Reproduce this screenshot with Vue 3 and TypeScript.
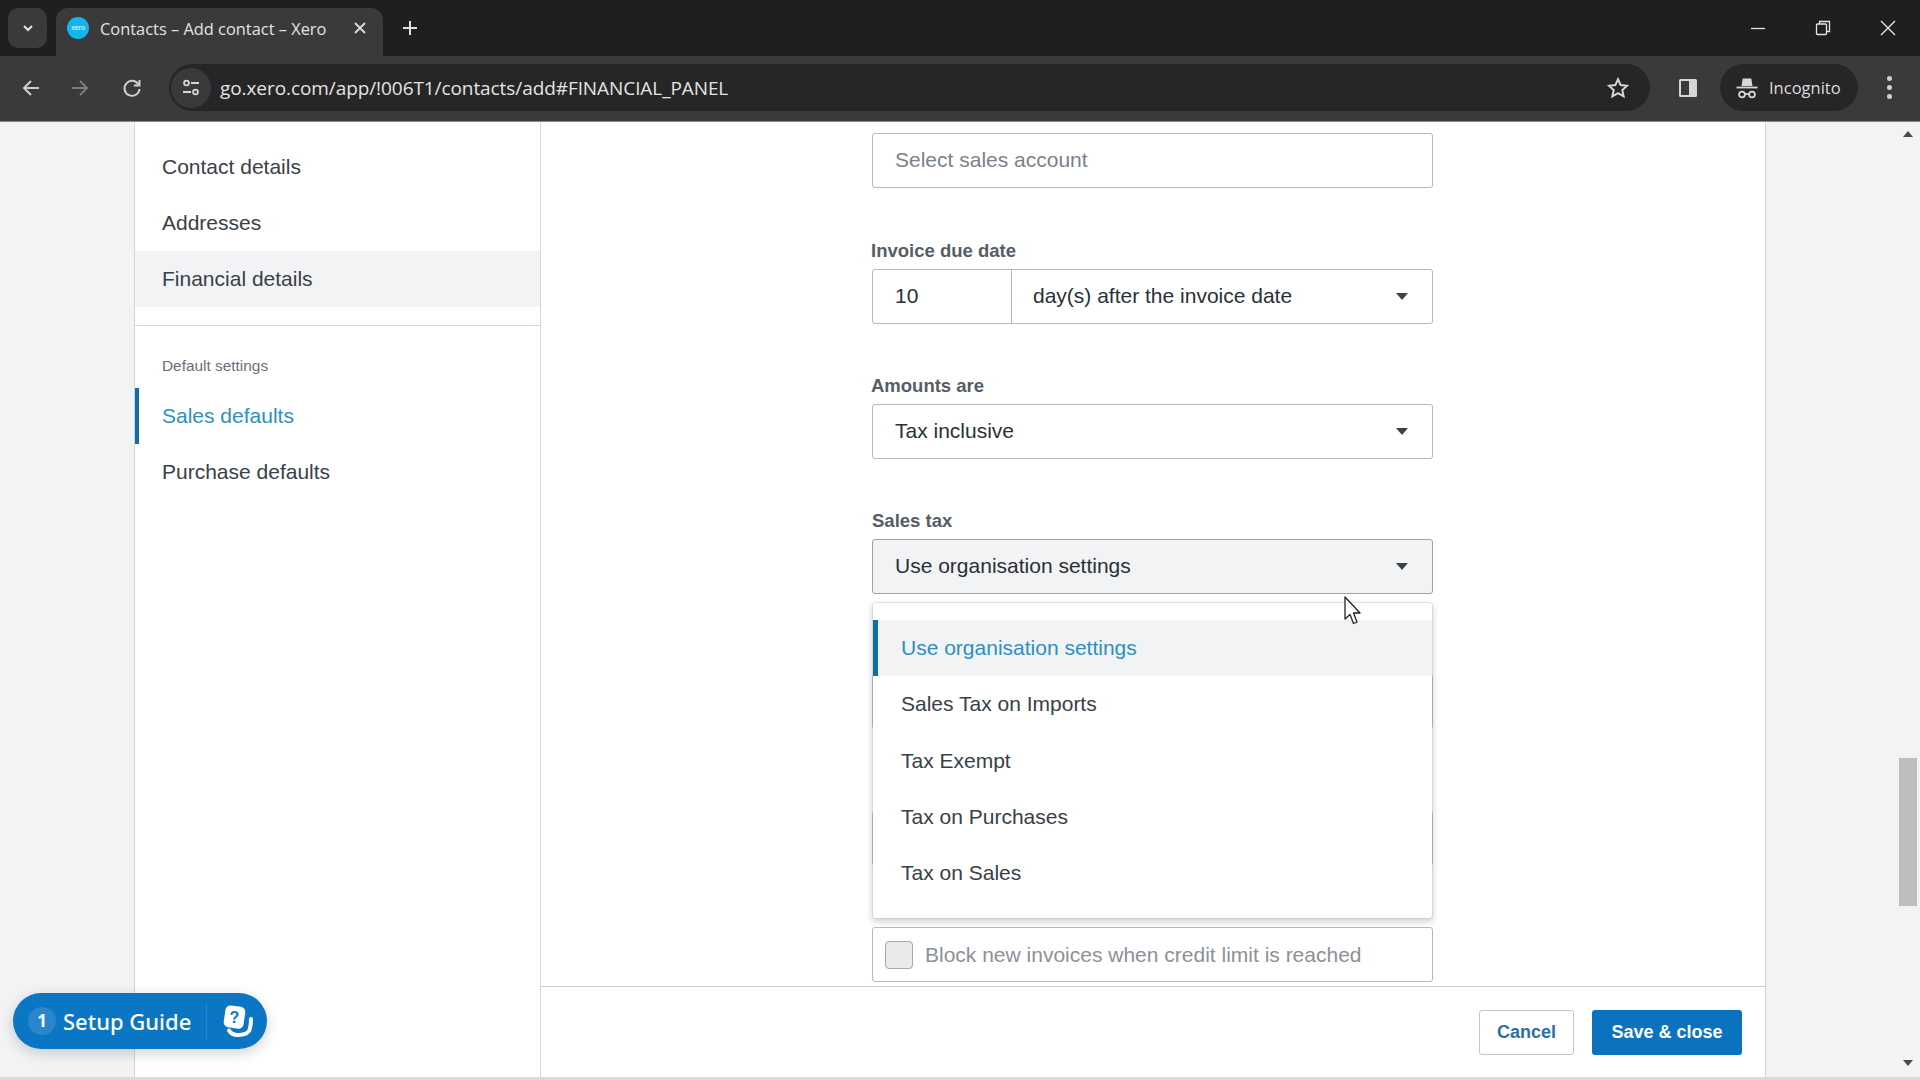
<script setup lang="ts">
const options = ['Use organisation settings', 'Sales Tax on Imports', 'Tax Exempt', 'Tax on Purchases', 'Tax on Sales']
const primaryNav = ['Contact details', 'Addresses', 'Financial details']
const secondaryNav = ['Sales defaults', 'Purchase defaults']
</script>

<template>
  <div class="window">
    <header class="tabstrip">
      <button class="tab-search">
        <svg width="14" height="14" viewBox="0 0 14 14"><path d="M3 5l4 4 4-4" fill="none" stroke="#e4e4e4" stroke-width="2" /></svg>
      </button>
      <div class="tab">
        <span class="favicon">xero</span>
        <span class="tab-title">Contacts – Add contact – Xero</span>
        <svg class="tab-close" width="14" height="14" viewBox="0 0 14 14"><path d="M2 2l10 10M12 2L2 12" stroke="#dcdcdc" stroke-width="1.8" /></svg>
      </div>
      <svg class="new-tab" width="16" height="16" viewBox="0 0 16 16"><path d="M8 1v14M1 8h14" stroke="#e0e0e0" stroke-width="2" /></svg>
      <div class="window-controls">
        <svg width="16" height="16" viewBox="0 0 16 16"><path d="M1 8.5h14" stroke="#e4e4e4" stroke-width="1.3" /></svg>
        <svg width="16" height="16" viewBox="0 0 16 16" fill="none" stroke="#e4e4e4" stroke-width="1.3"><rect x="1.5" y="4" width="10" height="10.5" rx="1" /><path d="M4.5 4V1.5h10v10H11.5" /></svg>
        <svg width="16" height="16" viewBox="0 0 16 16"><path d="M1 1l14 14M15 1L1 15" stroke="#e4e4e4" stroke-width="1.4" /></svg>
      </div>
    </header>

    <nav class="toolbar">
      <svg class="nav-back" width="20" height="20" viewBox="0 0 20 20" fill="none" stroke="#cfcfcf" stroke-width="2"><path d="M18 10H3M10 3l-7 7 7 7" /></svg>
      <svg class="nav-forward" width="20" height="20" viewBox="0 0 20 20" fill="none" stroke="#7d7d7d" stroke-width="2"><path d="M2 10h15M10 3l7 7-7 7" /></svg>
      <svg class="nav-reload" width="20" height="20" viewBox="0 0 20 20" fill="none" stroke="#cfcfcf" stroke-width="2"><path d="M16.5 6.5A7.5 7.5 0 1 0 17.5 11" /><path d="M17.5 2v5.5H12" /></svg>
      <div class="omnibox">
        <span class="site-info">
          <svg width="20" height="20" viewBox="0 0 20 20" fill="none" stroke="#d6d6d6" stroke-width="1.8"><circle cx="5.5" cy="5" r="2.4" /><path d="M10 5h8M2 14h8" /><circle cx="14.5" cy="14" r="2.4" /></svg>
        </span>
        <span class="url">go.xero.com/app/!006T1/contacts/add#FINANCIAL_PANEL</span>
        <svg class="star" width="22" height="22" viewBox="0 0 24 24" fill="none" stroke="#d6d6d6" stroke-width="2.2"><path d="M12 2.5l2.9 6.3 6.9.8-5.1 4.7 1.4 6.8L12 17.7l-6.1 3.4 1.4-6.8-5.1-4.7 6.9-.8z" /></svg>
      </div>
      <svg class="side-panel" width="20" height="20" viewBox="0 0 20 20"><rect x="1" y="1" width="18" height="18" rx="1.5" fill="#d4d4d4" /><rect x="3" y="3" width="8" height="14" fill="#3a3a3a" /></svg>
      <div class="incognito">
        <svg width="22" height="24" viewBox="0 0 22 24" fill="none" stroke="#d8d8d8" stroke-width="1.8"><path d="M5.5 10l1.2-7.500h8.600L16.500 10z" fill="#d8d8d8" stroke="none" /><path d="M0.500 11.500h21" /><circle cx="6" cy="18.500" r="2.900" /><circle cx="16" cy="18.500" r="2.900" /><path d="M9 18h4" /></svg>
        <span>Incognito</span>
      </div>
      <span class="kebab"><i></i><i></i><i></i></span>
    </nav>

    <div class="page">
      <div class="gutter-left"></div>

      <aside class="sidebar">
        <a
          v-for="item in primaryNav"
          :key="item"
          class="nav-item"
          :class="{ selected: item === 'Financial details' }"
        >{{ item }}</a>
        <hr class="nav-rule" />
        <div class="nav-heading">Default settings</div>
        <a
          v-for="item in secondaryNav"
          :key="item"
          class="nav-item"
          :class="{ active: item === 'Sales defaults' }"
        >{{ item }}</a>
      </aside>

      <main class="main">
        <div class="scroll">
          <form class="form" @submit.prevent>
            <div class="field placeholder">Select sales account</div>

            <div class="group first">
              <label class="label">Invoice due date</label>
              <div class="field split">
                <span class="days">10</span>
                <span class="after">day(s) after the invoice date<i class="caret"></i></span>
              </div>
            </div>

            <div class="group">
              <label class="label">Amounts are</label>
              <div class="field">Tax inclusive<i class="caret"></i></div>
            </div>

            <div class="group">
              <label class="label tight">Sales tax</label>
              <div class="field open">Use organisation settings<i class="caret"></i></div>
              <ul class="menu">
                <li
                  v-for="(opt, i) in options"
                  :key="opt"
                  class="option"
                  :class="{ current: i === 0 }"
                >{{ opt }}</li>
              </ul>
            </div>

            <div class="field behind one"></div>
            <div class="field behind two"></div>

            <div class="field check">
              <span class="box"></span>
              <span>Block new invoices when credit limit is reached</span>
            </div>
          </form>
        </div>

        <footer class="footer">
          <button class="btn cancel">Cancel</button>
          <button class="btn save">Save &amp; close</button>
        </footer>
      </main>

      <div class="gutter-right">
        <div class="scrollbar">
          <i class="arrow up"></i>
          <i class="thumb"></i>
          <i class="arrow down"></i>
        </div>
      </div>

      <button class="setup-guide">
        <span class="count">1</span>
        <span class="setup-text">Setup Guide</span>
        <span class="setup-icon">
          <svg width="32" height="34" viewBox="0 0 32 34">
            <path d="M7 26.500c2 3.500 5 4.500 9 4.500 6 0 10-1.500 11.500-5 1-3 1.500-7 1.500-11" fill="none" stroke="#fff" stroke-width="4" stroke-linecap="round" />
            <rect x="2.500" y="2" width="20" height="22" rx="5" fill="#fff" transform="rotate(8 12 13)" />
            <text x="12.500" y="19" text-anchor="middle" class="q">?</text>
          </svg>
        </span>
      </button>

      <svg class="cursor" width="20" height="30" viewBox="0 0 20 30">
        <path d="M2 1v22l5-4.500 3.500 9 3.500-1.500-3.500-9H17z" fill="#fff" stroke="#222" stroke-width="1.300" stroke-linejoin="round" />
      </svg>
    </div>

    <div class="bottom-edge"></div>
  </div>
</template>

<style>
html, body { margin: 0; background: #fff; overflow: hidden; }
</style>

<style scoped>
.window {
  width: 1920px;
  height: 1080px;
  display: flex;
  flex-direction: column;
  overflow: hidden;
  font-family: "Liberation Sans", Arial, sans-serif;
}

/* browser chrome */
.tabstrip {
  height: 56px;
  flex: none;
  box-sizing: border-box;
  background: #1f1f1f;
  display: flex;
  align-items: flex-start;
  padding: 8px 0 0 8px;
}
.tab-search {
  width: 39px;
  height: 40px;
  border: 0;
  padding: 0;
  border-radius: 10px;
  background: #3a3a3a;
  display: flex;
  align-items: center;
  justify-content: center;
}
.tab {
  width: 327px;
  height: 48px;
  margin-left: 9px;
  box-sizing: border-box;
  padding: 0 16px 8px 11px;
  border-radius: 12px 12px 0 0;
  background: #3a3a3a;
  display: flex;
  align-items: center;
}
.favicon {
  width: 22px;
  height: 22px;
  flex: none;
  border-radius: 50%;
  background: #13b5ea;
  color: #fff;
  font-size: 7px;
  line-height: 22px;
  text-align: center;
}
.tab-title {
  margin-left: 11px;
  flex: 1;
  font-family: "Open Sans", sans-serif;
  font-size: 16.4px;
  color: #e3e3e3;
  white-space: nowrap;
}
.new-tab { margin: 12px 0 0 19px; }
.window-controls {
  margin: 12px 24px 0 auto;
  display: flex;
  gap: 49px;
}

.toolbar {
  height: 66px;
  flex: none;
  box-sizing: border-box;
  background: #3a3a3a;
  border-bottom: 1px solid #8a8a8a;
  display: flex;
  align-items: center;
  padding: 0 0 2px 21px;
}
.nav-forward { margin-left: 29px; }
.nav-reload { margin-left: 32px; }
.omnibox {
  width: 1481px;
  height: 47px;
  margin-left: 27px;
  box-sizing: border-box;
  border-radius: 24px;
  background: #262626;
  display: flex;
  align-items: center;
  padding: 0 21px 0 0;
}
.site-info {
  width: 40px;
  height: 40px;
  margin-left: 2px;
  border-radius: 50%;
  background: #3a3a3a;
  display: flex;
  align-items: center;
  justify-content: center;
}
.url {
  margin-left: 9px;
  font-family: "Open Sans", sans-serif;
  font-size: 19px;
  letter-spacing: -0.08px;
  color: #e3e3e3;
  white-space: nowrap;
}
.star { margin-left: auto; }
.side-panel { margin-left: 28px; }
.incognito {
  width: 138px;
  height: 47px;
  margin-left: 22px;
  box-sizing: border-box;
  border-radius: 24px;
  background: #262626;
  display: flex;
  align-items: center;
  padding-left: 16px;
  gap: 11px;
  font-family: "Open Sans", sans-serif;
  font-size: 16.5px;
  color: #dcdcdc;
}
.kebab {
  margin-left: 29px;
  display: flex;
  flex-direction: column;
  gap: 4px;
}
.kebab i {
  width: 5px;
  height: 5px;
  border-radius: 50%;
  background: #d0d0d0;
}

/* page */
.page {
  flex: 1;
  min-height: 0;
  position: relative;
  display: flex;
  background: #fff;
  color: #2a3037;
  font-size: 20px;
}
.gutter-left {
  width: 134px;
  flex: none;
  background: #f2f3f5;
  border-right: 1px solid #d3d5d8;
}
.sidebar {
  width: 406px;
  flex: none;
  padding-top: 17px;
  box-sizing: border-box;
  border-right: 1px solid #d3d5d8;
  background: #fff;
}
.nav-item {
  display: block;
  height: 56px;
  line-height: 56px;
  padding-left: 27px;
  font-size: 21px;
  color: #39404a;
}
.nav-item.selected { background: #f2f3f5; }
.nav-item.active {
  color: #2f8fbd;
  box-shadow: inset 4px 0 0 #0f6ea6;
}
.nav-rule {
  margin: 18px 0 0;
  border: 0;
  border-top: 1px solid #d3d5d8;
}
.nav-heading {
  margin: 28px 0 10px;
  padding-left: 27px;
  height: 24px;
  line-height: 24px;
  font-size: 15.4px;
  color: #69707a;
}

.main {
  flex: 1;
  min-width: 0;
  display: flex;
  flex-direction: column;
  background: #fff;
}
.scroll {
  flex: 1;
  min-height: 0;
  overflow: hidden;
  padding: 11px 1px 0 0;
}
.form {
  width: 561px;
  margin: 0 auto;
}
.group { margin-top: 50px; position: relative; }
.group.first { margin-top: 51px; }
.label {
  display: block;
  height: 24px;
  margin-bottom: 6px;
  margin-left: -1px;
  line-height: 24px;
  font-size: 18.5px;
  font-weight: 700;
  color: #565d66;
}
.label.tight { margin-left: 0; }
.field {
  height: 55px;
  box-sizing: border-box;
  border: 1.5px solid #b4b7bb;
  border-radius: 3px;
  background: #fff;
  padding: 0 22px 1px;
  display: flex;
  align-items: center;
  position: relative;
  color: #2a3037;
  font-size: 21px;
}
.placeholder { color: #7b8189; }
.split { padding: 0; }
.days {
  width: 139px;
  height: 100%;
  box-sizing: border-box;
  padding: 0 0 1px 22px;
  display: flex;
  align-items: center;
  border-right: 1.5px solid #b4b7bb;
}
.after {
  flex: 1;
  padding: 0 0 1px 21px;
}
.caret {
  position: absolute;
  right: 24px;
  top: 23px;
  width: 0;
  height: 0;
  border-left: 6.5px solid transparent;
  border-right: 6.5px solid transparent;
  border-top: 7px solid #3b424b;
}
.field.open {
  background: #f2f3f5;
  border-color: #9fa3a9;
}
.menu {
  position: absolute;
  top: 93px;
  left: 0;
  right: 0;
  z-index: 3;
  height: 317px;
  box-sizing: border-box;
  margin: 0;
  padding: 17px 0 0;
  list-style: none;
  background: #fff;
  background-clip: padding-box;
  border: 1.5px solid rgba(180, 183, 187, 0.35);
  border-radius: 4px;
  box-shadow: 0 3px 6px rgba(0, 0, 0, 0.18);
}
.option {
  height: 56.25px;
  line-height: 56px;
  padding-left: 28px;
  font-size: 21px;
  color: #39404a;
}
.option.current {
  color: #2f8fbd;
  background: #f2f3f5;
  box-shadow: inset 5px 0 0 #0f6ea6;
}
.behind.one { margin-top: 80px; }
.behind.two { margin-top: 82px; }
.check {
  margin-top: 61px;
  padding: 0 0 0 12px;
  gap: 12px;
  color: #8c9198;
}
.box {
  width: 28px;
  height: 28px;
  flex: none;
  box-sizing: border-box;
  background: #e8eaec;
  border: 1.5px solid #a4a8ad;
  border-radius: 4px;
}

.footer {
  height: 91px;
  flex: none;
  box-sizing: border-box;
  border-top: 1px solid #c9ccd0;
  display: flex;
  justify-content: flex-end;
  align-items: center;
  gap: 18px;
  padding: 0 23px 0 0;
  background: #fff;
}
.btn {
  height: 45px;
  border-radius: 3px;
  font-family: "Liberation Sans", Arial, sans-serif;
  font-size: 18px;
  font-weight: 700;
  padding: 0;
}
.cancel {
  width: 95px;
  background: #fff;
  color: #2b6fa8;
  border: 1.5px solid #c2c5c9;
}
.save {
  width: 150px;
  background: #0b72c0;
  color: #fff;
  border: 0;
}

.gutter-right {
  width: 155px;
  flex: none;
  box-sizing: border-box;
  background: #f2f3f5;
  border-left: 1px solid #d3d5d8;
  display: flex;
  justify-content: flex-end;
}
.scrollbar {
  width: 18px;
  margin-right: 3px;
  padding-top: 9px;
  display: flex;
  flex-direction: column;
  align-items: center;
}
.arrow {
  width: 0;
  height: 0;
  border-left: 5px solid transparent;
  border-right: 5px solid transparent;
}
.arrow.up { border-bottom: 6px solid #4a4a4a; }
.arrow.down { border-top: 6px solid #4a4a4a; margin-top: 154px; }
.thumb {
  width: 18px;
  height: 148px;
  margin-top: 621px;
  background: #bdbdbd;
}

.setup-guide {
  position: absolute;
  left: 13px;
  top: 871px;
  z-index: 4;
  width: 254px;
  height: 56px;
  box-sizing: border-box;
  border: 0;
  border-radius: 28px;
  padding: 0 0 0 15px;
  background: #0b76c4;
  box-shadow: 0 4px 14px rgba(0, 0, 0, 0.18);
  color: #fff;
  display: flex;
  align-items: center;
  font-family: "Noto Sans", sans-serif;
}
.count {
  width: 28px;
  height: 28px;
  flex: none;
  border-radius: 50%;
  background: #2a86cc;
  font-size: 17px;
  font-weight: 700;
  line-height: 28px;
  text-align: center;
}
.setup-text {
  margin-left: 7px;
  font-size: 22px;
  font-weight: 500;
  white-space: nowrap;
}
.setup-icon {
  margin-left: 15px;
  padding-left: 15px;
  height: 36px;
  border-left: 1px solid #2a86cc;
  display: flex;
  align-items: center;
}
.q {
  font-family: "Liberation Sans", Arial, sans-serif;
  font-size: 16px;
  font-weight: 700;
  fill: #0b76c4;
}

.cursor {
  position: absolute;
  left: 1343px;
  top: 474px;
  z-index: 5;
}

.bottom-edge {
  height: 3px;
  flex: none;
  background: #d9dadc;
}
</style>
